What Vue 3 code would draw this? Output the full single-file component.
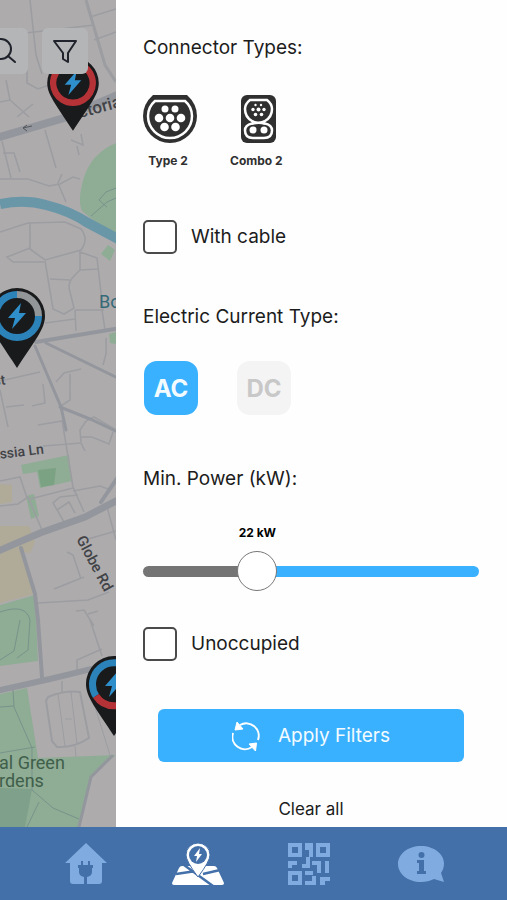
<template>
  <div class="screen">
    <main class="content">
      <section class="map" aria-label="Map">
        <svg class="map-canvas" viewBox="0 0 116 827" preserveAspectRatio="xMinYMin slice">
          <rect width="116" height="827" fill="#aeabad" />

          <!-- parks -->
          <g fill="#8fac95">
            <path d="M116 143 Q92 153 84 177 Q77 200 82 211 L116 238Z" />
            <path d="M21 465 L69 455 L72 481 L40 488 L37 472 L23 474Z" />
            <path d="M26 496 L34 494 L39 516 L31 519Z" />
            <path d="M0 605 L35 595 L38 661 L0 666Z" />
            <path d="M0 694 L27 688 L38 758 L116 755 L93 774 L79 827 L0 827Z" />
            <path d="M101 254 L108 245 L115 250 L110 261Z" />
            <path d="M109 334 L116 332 L116 344 L110 343Z" />
          </g>
          <path d="M38 470 L56 468 L54 485 L41 487Z" fill="#7ba283" />
          <path d="M0 788 L32 789 L25 827 L0 827Z" fill="#7fa08a" />
          <g fill="#b0aa98">
            <path d="M0 484 L12 485 L12 502 L0 504Z" />
            <path d="M0 526 L29 526 L35 542 L30 553 L22 552 L34 594 L0 603Z" />
          </g>

          <!-- canal -->
          <path d="M0 204 Q25 199 46 205 Q70 211 88 223 L120 240" fill="none" stroke="#6997a8" stroke-width="10" />

          <!-- streets -->
          <g fill="none" stroke="#9c9da1" stroke-width="1.6">
            <path d="M30 0 L36 55 L42 74" />
            <path d="M86 0 L105 65 L116 82" stroke-width="3" />
            <path d="M90 17 L116 9 M26 33 L94 25 M94 40 L116 32" />
            <path d="M27 65 L27 83 L38 89 L55 83 M0 102 L10 100 L29 117 M6 80 L10 100 M17 117 L33 104" />
            <path d="M0 179 L28 179 L49 186 L60 184 L73 177 L80 179 M62 174 L58 183 L66 202 M45 130 L56 168" />
            <path d="M71 140 L83 145 L81 134 M77 146 L79 155 M3 153 L14 153 L20 172 M2 141 L11 178" />
            <path d="M0 232 L28 223 L65 222 L81 229 Q89 239 81 250 L45 260 L30 249 L30 223 M30 248 L7 257 L13 262 L44 262" />
            <path d="M45 261 L53 309 L64 314 L74 308 L70 292 Q67 283 74 276 L80 270 L80 252 L97 258 L103 310 L75 310 M50 279 L70 280 M80 270 L99 269" />
            <path d="M75 310 L76 331 M45 323 L75 319 M102 310 L105 330 M106 338 L106 354 L103 365" />
            <path d="M0 381 L40 372 M0 390 L8 427 M6 407 L24 405 M32 406 L45 403 L43 384" />
            <path d="M56 382 L64 373 L81 369 M70 374 L70 400 L61 406 M38 425 L62 421" />
            <path d="M62 420 L73 487 L84 512 M43 446 L81 443 L85 451 M116 430 L94 417 L86 421 L80 430 L81 442 M80 437 L92 437 L109 444 L113 432" />
            <path d="M0 481 L20 477 L27 498 M0 506 L18 504 L28 497 L42 530 M30 499 L73 488 M73 491 L100 486 L108 489" />
            <path d="M64 522 L53 503 L60 497 L78 495 M57 510 L69 502 L75 513 M88 539 L116 531 M107 507 L116 540" />
            <path d="M38 603 L88 600 L109 592 M67 552 L73 555 L81 579 M54 589 L84 577 M76 611 L84 610 L94 626 M88 614 L98 611" />
            <path d="M90 620 L102 656 M77 672 L77 660 L102 649 M62 681 L62 693" />
            <path stroke-width="2" d="M48 697 Q65 690 80 692 L89 738 Q74 748 57 747 L52 741 L46 701Z" />
            <path stroke-width="1" d="M58 694 L65 746 M71 692 L77 744 M65 719 L72 719 M91 694 L110 755 M75 746 L76 757" />
          </g>
          <g fill="none" stroke="#78938b" stroke-width="1">
            <path d="M91 216 L107 202 L116 198 M99 200 L106 192 L116 188 M99 200 L107 207" />
            <path d="M0 612 Q26 603 30 620 L28 650 L17 658 M20 620 L14 651 L0 660" />
            <path d="M13 690 L14 707 L32 748 L32 790 L53 808 L79 819 M0 707 L14 706 M0 753 L35 747 M39 802 L27 827" />
          </g>

          <!-- main roads -->
          <g fill="none" stroke="#93979d" stroke-linecap="round">
            <path stroke-width="8" d="M-4 138 L64 118 L120 94" />
            <path stroke-width="4" d="M36 342 L72 336 L120 328" />
            <path stroke-width="3" d="M46 343 L120 379 M35 346 L61 407 L66 430 M60 407 L90 419 L120 433" />
            <path stroke-width="7" d="M-4 552 L40 533 L85 517 L120 499" />
            <path stroke-width="4" d="M21 548 L35 594 L38 620 L42 677 M101 502 L120 474" />
            <path stroke-width="6" d="M-4 691 L50 679 L120 662" />
            <path stroke-width="3" d="M112 756 L91 777 L79 827" />
          </g>
          <path d="M23 128 L32 126 M23 128 L27 125 M23 128 L27 131" fill="none" stroke="#54575c" stroke-width="1" />

          <g class="street" fill="#414347">
            <text transform="translate(80 118) rotate(-15)">ctoria</text>
            <text transform="translate(-6 386) rotate(-8)" font-size="14">st</text>
            <text transform="translate(-9 460) rotate(-7)" font-size="14">Assia Ln</text>
            <text transform="translate(76 539) rotate(62)" font-size="15">Globe Rd</text>
          </g>
          <g class="place">
            <text x="99" y="308" fill="#356a78">Bow</text>
            <text x="-1" y="769" fill="#3f5f4a">al Green</text>
            <text x="-1" y="787" fill="#3f5f4a">rdens</text>
          </g>

          <g v-for="pin in pins" :key="pin.id" :transform="`translate(${pin.x} ${pin.y}) scale(${pin.scale})`">
            <path d="M-28 0 A28 28 0 1 1 28 0 C28 13 18 24 0 52 C-18 24 -28 13 -28 0Z" fill="#191a1c" />
            <path
              v-for="arc in pin.arcs"
              :key="arc.d"
              :d="arc.d"
              :stroke="arc.color"
              fill="none"
              stroke-width="7"
            />
            <path d="M4 -13 L-9 2 L-2 2 L-5 13 L9 -3 L2 -3Z" fill="#2f8fcb" />
          </g>
        </svg>

        <div class="map-tools">
          <button class="tool" aria-label="Search">
            <svg width="28" height="28" viewBox="0 0 28 28" fill="none" stroke="#20232c" stroke-width="2" stroke-linecap="round">
              <circle cx="10" cy="12" r="10" />
              <path d="M17 19 L24 25" />
            </svg>
          </button>
          <button class="tool" aria-label="Filters">
            <svg width="26" height="26" viewBox="0 0 26 26" fill="none" stroke="#20232c" stroke-width="2" stroke-linejoin="round">
              <path d="M2 3 H24 L16 15 V24 L11 21 V15Z" />
            </svg>
          </button>
        </div>
      </section>

      <form class="filters" @submit.prevent>
        <h2>Connector Types:</h2>
        <div class="connectors">
          <button type="button" class="connector">
            <svg width="54" height="48" viewBox="0 0 54 48">
              <path d="M10 0 H44 Q54 9 54 21 A27 27 0 0 1 0 21 Q0 9 10 0Z" fill="#303030" />
              <path d="M12 6 H42 Q49 12 49 21 A22 22 0 0 1 5 21 Q5 12 12 6Z" fill="none" stroke="#fff" stroke-width="2.5" />
              <g fill="#fff">
                <circle cx="22" cy="14" r="3.5" /><circle cx="32" cy="14" r="3.5" />
                <circle cx="16" cy="23" r="4.3" /><circle cx="27" cy="23" r="4.3" /><circle cx="38" cy="23" r="4.3" />
                <circle cx="21.500" cy="32" r="4.3" /><circle cx="32.500" cy="32" r="4.3" />
              </g>
            </svg>
            <span>Type 2</span>
          </button>
          <button type="button" class="connector">
            <svg width="35" height="48" viewBox="0 0 35 48">
              <rect width="35" height="48" rx="6" fill="#303030" />
              <path
                d="M9 5 H26 Q31 9 31 14 Q31 22 24 26 Q21 27.500 24 28.500 Q31 30 31 35.500 Q31 43 23 43 H12 Q4 43 4 35.500 Q4 30 11 28.500 Q14 27.500 11 26 Q4 22 4 14 Q4 9 9 5Z"
                fill="none"
                stroke="#fff"
                stroke-width="2.5"
              />
              <path d="M11 26 Q17.500 29 24 26 M11 29 Q17.500 27 24 29" fill="none" stroke="#fff" stroke-width="2" />
              <g fill="#fff">
                <circle cx="14.500" cy="10" r="1.200" /><circle cx="20" cy="10" r="1.200" />
                <circle cx="12" cy="14.500" r="1.700" /><circle cx="17.500" cy="14.500" r="2" /><circle cx="23" cy="14.500" r="1.700" />
                <circle cx="14.500" cy="19.500" r="1.800" /><circle cx="20.500" cy="19.500" r="1.800" />
                <circle cx="12" cy="35" r="3.500" /><circle cx="23" cy="35" r="3.500" />
              </g>
            </svg>
            <span>Combo 2</span>
          </button>
        </div>

        <label class="check">
          <input type="checkbox" v-model="withCable">
          <span>With cable</span>
        </label>

        <h2>Electric Current Type:</h2>
        <div class="currents">
          <button
            v-for="type in currentTypes"
            :key="type"
            type="button"
            class="current"
            :class="{ active: current === type }"
            :aria-pressed="current === type"
            @click="current = type"
          >
            {{ type }}
          </button>
        </div>

        <h2><label for="power">Min. Power (kW):</label></h2>
        <div class="power">
          <div class="power-scale">
            <output for="power" :style="{ marginLeft: fill + '%' }">{{ power }} kW</output>
          </div>
          <input id="power" type="range" min="0" :max="maxPower" v-model.number="power" :style="{ '--fill': fill + '%' }">
        </div>

        <label class="check">
          <input type="checkbox" v-model="unoccupied">
          <span>Unoccupied</span>
        </label>

        <button type="submit" class="btn-apply">
          <svg width="28" height="30" viewBox="0 0 28 30" fill="none" stroke="#fff" stroke-width="2">
            <path d="M8 4 A12.500 12.500 0 0 1 26 19" />
            <path d="M1 12 A12.500 12.500 0 0 0 20 26" />
            <path d="M5 1 L3 9 L11 8Z M24.500 22 L23.500 30 L17 23Z" fill="#fff" stroke-width="1" />
          </svg>
          Apply Filters
        </button>
        <button type="button" class="btn-clear" @click="clearAll">Clear all</button>
      </form>
    </main>

    <nav class="tabs">
      <a href="#" aria-label="Home">
        <svg width="42" height="42" viewBox="0 0 42 42">
          <path d="M21 0 L42 20 H37 V38 Q37 41 34 41 H8 Q5 41 5 38 V20 H0Z" fill="#7fabe0" />
          <path d="M16 18 h2 v4 h5 v-4 h2 v4 h3 v3 h-1 v4 q0 4 -5 5 v7 h-3 v-7 q-5 -1 -5 -5 v-4 h-1 v-3 h3z" fill="#4470a9" />
        </svg>
      </a>
      <a href="#" aria-label="Map" aria-current="page">
        <svg width="52" height="44" viewBox="0 0 52 44">
          <path d="M10 24 H42 Q44 24 45 26 L52 41 Q52 43 50 43 H2 Q0 43 0 41 L7 26 Q8 24 10 24Z" fill="#fff" />
          <path d="M4 32 L24 29 M12 23 L41 44 M31 32 L48 28" fill="none" stroke="#4470a9" stroke-width="2.5" />
          <path d="M26 1 A12 12 0 0 1 38 13 Q38 19 26 35 Q14 19 14 13 A12 12 0 0 1 26 1Z" fill="#fff" stroke="#4470a9" stroke-width="1" />
          <circle cx="26" cy="13" r="9" fill="#4470a9" />
          <path d="M28 6 L22 14 H25 L24 20 L30 12 H27Z" fill="#fff" />
        </svg>
      </a>
      <a href="#" aria-label="Scan QR code">
        <svg width="42" height="42" viewBox="0 0 42 42" fill="#7fabe0">
          <path fill-rule="evenodd" d="M0 0H14V14H0Z M4 4V10H10V4Z M28 0H42V14H28Z M32 4V10H38V4Z M0 28H14V42H0Z M4 32V38H10V32Z" />
          <path d="M17 0h8v14h-4v-7h-4z M0 18h9v4h-5v3h-4z M18 14h4v11h-8v-4h4z M24 18h9v12h-4v-8h-5z M37 18h4v12h-4z M17 28h8v4h-8z M24 33h4v9h-11v-4h7z M32 34h10v4h-5v4h-5z" />
        </svg>
      </a>
      <a href="#" aria-label="Information">
        <svg width="47" height="38" viewBox="0 0 47 38">
          <path d="M23 1 C36 1 46 9 46 18.500 C46 22 45 25 43 28 L46 37 L36 34 C32 36 28 37 23 37 C10 37 0 29 0 19 C0 9 10 1 23 1Z" fill="#7fabe0" />
          <circle cx="23.500" cy="10" r="3" fill="#4470a9" />
          <path d="M19 15 h7 v11 h2 v3 h-9 v-3 h2 v-8 h-2z" fill="#4470a9" />
        </svg>
      </a>
    </nav>
  </div>
</template>

<script setup>
import { ref, computed } from 'vue'

const pins = [
  {
    id: 1,
    x: 73,
    y: 83,
    scale: 0.92,
    arcs: [{ d: 'M0 -21.5 A21.5 21.5 0 1 1 -0.1 -21.5', color: '#b53237' }]
  },
  {
    id: 2,
    x: 17,
    y: 316,
    scale: 1,
    arcs: [
      { d: 'M21.5 0 A21.5 21.5 0 1 1 0 -21.5', color: '#2c83b9' },
      { d: 'M0 -21.5 A21.5 21.5 0 0 1 21.5 0', color: '#939699' }
    ]
  },
  {
    id: 3,
    x: 114,
    y: 684,
    scale: 1,
    arcs: [
      { d: 'M-18 12 A21.5 21.5 0 1 1 18 12', color: '#2c83b9' },
      { d: 'M18 12 A21.5 21.5 0 0 1 -18 12', color: '#b53237' }
    ]
  }
]

const currentTypes = ['AC', 'DC']
const maxPower = 69

const withCable = ref(false)
const unoccupied = ref(false)
const current = ref('AC')
const power = ref(22)

const fill = computed(() => (power.value / maxPower) * 100)

const clearAll = () => {
  withCable.value = false
  unoccupied.value = false
  current.value = ''
  power.value = 0
}
</script>

<style>
body {
  margin: 0;
  background: #fefefe;
}
</style>

<style scoped>
* {
  box-sizing: border-box;
}

.screen {
  min-height: 100vh;
  display: flex;
  flex-direction: column;
  font-family: Inter, "Liberation Sans", sans-serif;
  color: #1c1c1c;
}

button {
  font-family: inherit;
  border: none;
  padding: 0;
  cursor: pointer;
}

.content {
  flex: 1;
  display: grid;
  grid-template-columns: 116px 1fr;
}

.map {
  position: relative;
  overflow: hidden;
  background: #aeabad;
}

.map-canvas {
  position: absolute;
  inset: 0;
  width: 100%;
  height: 100%;
}

.street {
  font-family: Roboto, sans-serif;
  font-size: 17px;
  font-weight: 500;
}

.place {
  font-family: Roboto, sans-serif;
  font-size: 18px;
}

.map-tools {
  position: absolute;
  top: 28px;
  left: -18px;
  display: flex;
  gap: 14px;
}

.tool {
  width: 46px;
  height: 46px;
  display: flex;
  align-items: center;
  justify-content: center;
  background: #b3b5b7;
  border-radius: 6px;
}

.filters {
  display: flex;
  flex-direction: column;
  padding: 36px 28px 6px 27px;
  background: #fefefe;
}

h2 {
  margin: 0;
  font-size: 19px;
  line-height: 24px;
  font-weight: 400;
}

.connectors {
  display: flex;
  gap: 33px;
  margin: 35px 0 51px;
}

.connector {
  display: flex;
  flex-direction: column;
  align-items: center;
  gap: 10px;
  background: none;
  color: #303030;
}

.connector span {
  padding-right: 4px;
  font-size: 12px;
  line-height: 16px;
  font-weight: 700;
}

.check {
  display: flex;
  align-items: center;
  gap: 14px;
  font-size: 19px;
  line-height: 24px;
}

.check input {
  appearance: none;
  width: 34px;
  height: 34px;
  margin: 0;
  border: 2px solid #4a4a4a;
  border-radius: 5px;
  background: #fff;
}

.check input:checked {
  background: #3ab1ff;
}

.check + h2 {
  margin-top: 51px;
}

.currents {
  display: flex;
  gap: 39px;
  margin: 32px 1px 52px;
}

.current {
  width: 54px;
  height: 54px;
  border-radius: 13px;
  background: #f4f4f4;
  color: #c8c8c8;
  font-size: 24px;
  font-weight: 700;
}

.current.active {
  background: #3ab1ff;
  color: #f4fbff;
}

.power {
  display: flex;
  flex-direction: column;
  gap: 10px;
  margin: 34px 0 36px;
}

.power-scale {
  display: flex;
  padding: 0 20px;
}

.power output {
  transform: translateX(-50%);
  font-size: 12px;
  line-height: 16px;
  font-weight: 700;
  white-space: nowrap;
  color: #000;
}

.power input {
  appearance: none;
  width: 100%;
  height: 40px;
  margin: 0;
  background: none;
}

.power input::-webkit-slider-runnable-track {
  height: 11px;
  border-radius: 6px;
  background: linear-gradient(to right, #757575 var(--fill), #3ab1ff var(--fill));
}

.power input::-webkit-slider-thumb {
  appearance: none;
  width: 40px;
  height: 40px;
  margin-top: -15px;
  border: 1px solid #777;
  border-radius: 50%;
  background: #fff;
}

.btn-apply {
  display: flex;
  align-items: center;
  justify-content: center;
  gap: 18px;
  height: 53px;
  margin: 48px 15px 35px;
  border-radius: 6px;
  background: #3ab1ff;
  color: #f4fbff;
  font-size: 19px;
}

.btn-clear {
  align-self: center;
  background: none;
  color: #1c1c1c;
  font-size: 17px;
  line-height: 24px;
}

.tabs {
  display: flex;
  height: 73px;
  padding: 0 30px;
  background: #4470a9;
}

.tabs a {
  flex: 1;
  display: flex;
  align-items: center;
  justify-content: center;
}
</style>
